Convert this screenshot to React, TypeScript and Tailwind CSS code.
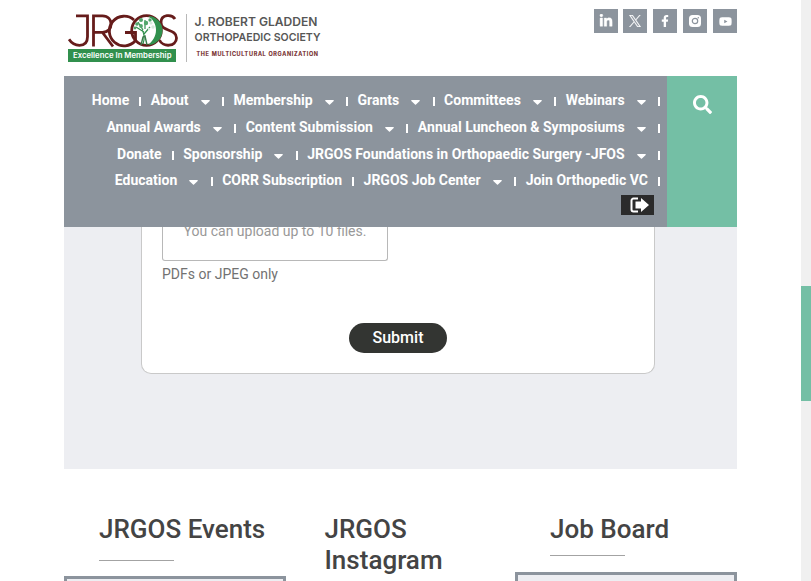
import React from 'react';
import { FaLinkedinIn, FaFacebookF, FaYoutube } from 'react-icons/fa';
import { FaSearch } from 'react-icons/fa';

type Item = { label: string; caret?: boolean };

const rows: { height: string; items: Item[] }[] = [
  {
    height: 'h-[27px]',
    items: [
      { label: 'Home' },
      { label: 'About', caret: true },
      { label: 'Membership', caret: true },
      { label: 'Grants', caret: true },
      { label: 'Committees', caret: true },
      { label: 'Webinars', caret: true },
    ],
  },
  {
    height: 'h-[27px]',
    items: [
      { label: 'Annual Awards', caret: true },
      { label: 'Content Submission', caret: true },
      { label: 'Annual Luncheon & Symposiums', caret: true },
    ],
  },
  {
    height: 'h-[26px]',
    items: [
      { label: 'Donate' },
      { label: 'Sponsorship', caret: true },
      { label: 'JRGOS Foundations in Orthopaedic Surgery -JFOS', caret: true },
    ],
  },
  {
    height: 'h-[27px]',
    items: [
      { label: 'Education', caret: true },
      { label: 'CORR Subscription' },
      { label: 'JRGOS Job Center', caret: true },
      { label: 'Join Orthopedic VC' },
    ],
  },
];

function Caret() {
  return (
    <svg className="ml-3 mt-[3px] h-[5px] w-[9px]" viewBox="0 0 9 5" fill="#fff">
      <path d="M.7 0h7.6c.5 0 .7.6.4.9L5 4.6a.7.7 0 0 1-1 0L.3.9C0 .6.2 0 .7 0Z" />
    </svg>
  );
}

function Logo() {
  return (
    <svg width="256" height="52" viewBox="0 0 256 52" className="block">
      <g fill="none" stroke="#661c1b" strokeWidth="2.800">
        <path d="M8 2.800h11.500v21c0 6-3.500 8.500-8 8.500-4.500 0-8-2-10.500-6" />
        <path d="M25.500 33.500V2.800h9c11.500 0 11.500 16.500 0 16.500h-9M34.500 19.500l10.500 14" />
        <path d="M66 7A14.800 14.800 0 1 0 67.500 27.500V19.500H57" />
        <circle cx="78.500" cy="17.500" r="14.800" />
        <path d="M107 6c-3-5-14-5-14 3.500C93 19 108.500 15.500 108.500 25c0 9-14 9.500-17 2" />
      </g>
      <path d="M80 3a14.500 14.500 0 0 1 0 29c5-4 8-9 8-15s-3-11-8-14Z" fill="#31904d" />
      <g fill="none" stroke="#31904d" strokeWidth="1.200">
        <path d="M75 31c2-6 1-11-1-14M76 21l6-7M76 19l-8-5M77 16V7M75 17l-5-8" />
      </g>
      <g fill="#51a66a">
        <circle cx="69" cy="11" r="1.800" />
        <circle cx="73" cy="7" r="2" />
        <circle cx="78" cy="10" r="2.200" />
        <circle cx="73" cy="13" r="1.900" />
        <circle cx="67" cy="15" r="1.400" />
        <circle cx="82" cy="7" r="1.700" />
      </g>
      <g fill="#d7eadc">
        <circle cx="83" cy="10" r="1.600" />
        <circle cx="85" cy="14" r="1.700" />
        <circle cx="81" cy="16" r="1.200" />
      </g>
      <path d="m73 32 2-8 2-1 2 9" fill="none" stroke="#397b49" strokeWidth="1.400" />
      <rect x="0" y="36" width="108" height="13" fill="#31904d" />
      <g className="font-['Inter',sans-serif] font-semibold">
        <text x="5" y="45" fontSize="7.500" fill="#fff" textLength="98.500" lengthAdjust="spacingAndGlyphs">Excellence In Membership</text>
        <rect x="118" y="1" width="1" height="48" fill="#b8b8b8" />
        <text x="126.500" y="13.200" fontSize="12" fill="#575756" textLength="123" lengthAdjust="spacingAndGlyphs">J. ROBERT GLADDEN</text>
        <text x="126.500" y="28.200" fontSize="11" fill="#575756" textLength="126" lengthAdjust="spacingAndGlyphs">ORTHOPAEDIC SOCIETY</text>
        <text x="128.500" y="43" fontSize="5.500" fill="#702526" stroke="#702526" strokeWidth=".15" textLength="121.500" lengthAdjust="spacing">THE MULTICULTURAL ORGANIZATION</text>
      </g>
    </svg>
  );
}

function Social({ children }: { children: React.ReactNode }) {
  return <a className="flex size-6 items-center justify-center bg-[#8c949d] text-white">{children}</a>;
}

export default function App() {
  return (
    <div className="flex h-[581px] w-[811px] overflow-hidden bg-white font-['Roboto',sans-serif]">
      <div className="w-[801px] px-16">
        <div className="w-[673px]">
          <header className="flex h-[76px] justify-between">
            <div className="pl-1 pt-[13px]">
              <Logo />
            </div>
            <div className="flex pt-[9px]">
              <Social><FaLinkedinIn size={14} stroke="#fff" strokeWidth={14} /></Social>
              <div className="ml-[5px] flex gap-[6px]">
                <Social>
                  <svg width="12" height="12" viewBox="0 0 24 24" fill="#fff" stroke="#fff" strokeWidth=".5">
                    <path d="M14.300 10.200 23 0h-2l-7.600 8.800L7.300 0H.3l9.200 13.400L.3 24h2.100l8-9.300 6.400 9.300h7L14.300 10.200Zm-2.900 3.300-.9-1.300L3.200 1.600h3.100l6 8.500.9 1.300 7.700 11.100h-3.100l-6.400-9Z" />
                  </svg>
                </Social>
                <Social><FaFacebookF size={12} /></Social>
                <Social>
                  <svg width="12" height="12" viewBox="0 0 12 12">
                    <rect width="12" height="12" rx="3.500" fill="#fff" />
                    <circle cx="6" cy="6" r="2.700" fill="none" stroke="#8c949d" strokeWidth="1.200" />
                    <circle cx="9.300" cy="2.700" r=".7" fill="#8c949d" />
                  </svg>
                </Social>
                <Social><FaYoutube size={13} /></Social>
              </div>
            </div>
          </header>

          <div className="flex h-[151px]">
            <nav className="flex w-[603px] flex-col items-end bg-[#8c949d] pr-[7px] pt-[11px] text-sm font-bold text-white">
              {rows.map((row) => (
                <div key={row.items[0].label} className={`flex ${row.height}`}>
                  {row.items.map((item) => (
                    <div key={item.label} className="flex h-[27px] items-center whitespace-nowrap pl-[9.5px]">
                      <span className="mb-0.5">{item.label}</span>
                      {item.caret && <Caret />}
                      <span className={`${item.caret ? 'ml-[12.4px]' : 'ml-[10px]'} mt-0.5 h-[9px] w-0.5 bg-white`} />
                    </div>
                  ))}
                </div>
              ))}
              <div className="mr-[6px] mt-px flex h-5 w-[33px] items-center bg-[#2b2b2b] pl-[9px]">
                <svg width="19" height="16" viewBox="0 0 19 16">
                  <path d="M8 1.500H3.500a2 2 0 0 0-2 2v9a2 2 0 0 0 2 2H8" fill="none" stroke="#fff" strokeWidth="2" />
                  <path d="M5.500 4.500H11V1l8 7-8 7v-3.500H5.500Z" fill="#fff" />
                </svg>
              </div>
            </nav>
            <div className="flex w-[70px] justify-center bg-[#74bfa5] pt-[19px]">
              <FaSearch size={19} color="#fff" />
            </div>
          </div>

          <section className="h-[242px] bg-[#edeef2] px-[77px]">
            <div className="h-[147px] w-[514px] overflow-hidden rounded-b-[10px] border border-t-0 border-[#c9c9c9] bg-white">
              <div className="ml-5 flex h-[34px] w-[226px] justify-center rounded-b-[3px] border border-t-0 border-[#b8b8b8] text-sm leading-4 text-[#999]">
                <div className="-mt-1">You can upload up to 10 files.</div>
              </div>
              <p className="ml-5 mt-[5px] text-sm leading-4 text-[#727272]">PDFs or JPEG only</p>
              <div className="flex justify-center pt-[41px]">
                <button className="h-[30px] w-[98px] rounded-full bg-[#333532] text-base font-medium leading-[30px] text-white">Submit</button>
              </div>
            </div>
          </section>

          <section className="grid grid-cols-[222px_229px_222px] pt-[45px] text-[#444]">
            <div>
              <h2 className="pl-[35px] text-[26px] font-medium leading-[31px]">JRGOS Events</h2>
              <div className="ml-[35px] mt-[15px] h-px w-[75px] bg-[#a3a3a3]" />
              <div className="mt-[15px] h-10 border-[3px] border-[#8c949d] bg-[#edeef2]" />
            </div>
            <h2 className="w-[190px] pl-[38.5px] text-[26px] font-medium leading-[31px]">JRGOS Instagram</h2>
            <div>
              <h2 className="pl-[35px] text-[26px] font-medium leading-[31px]">Job Board</h2>
              <div className="ml-[35px] mt-[10px] h-px w-[75px] bg-[#a3a3a3]" />
              <div className="mt-4 h-10 border-[3px] border-[#8c949d] bg-[#edeef2]" />
            </div>
          </section>
        </div>
      </div>
      <div className="w-[10px] bg-[#f0f0f0] pt-[286px]">
        <div className="h-[115px] bg-[#74bfa5]" />
      </div>
    </div>
  );
}
